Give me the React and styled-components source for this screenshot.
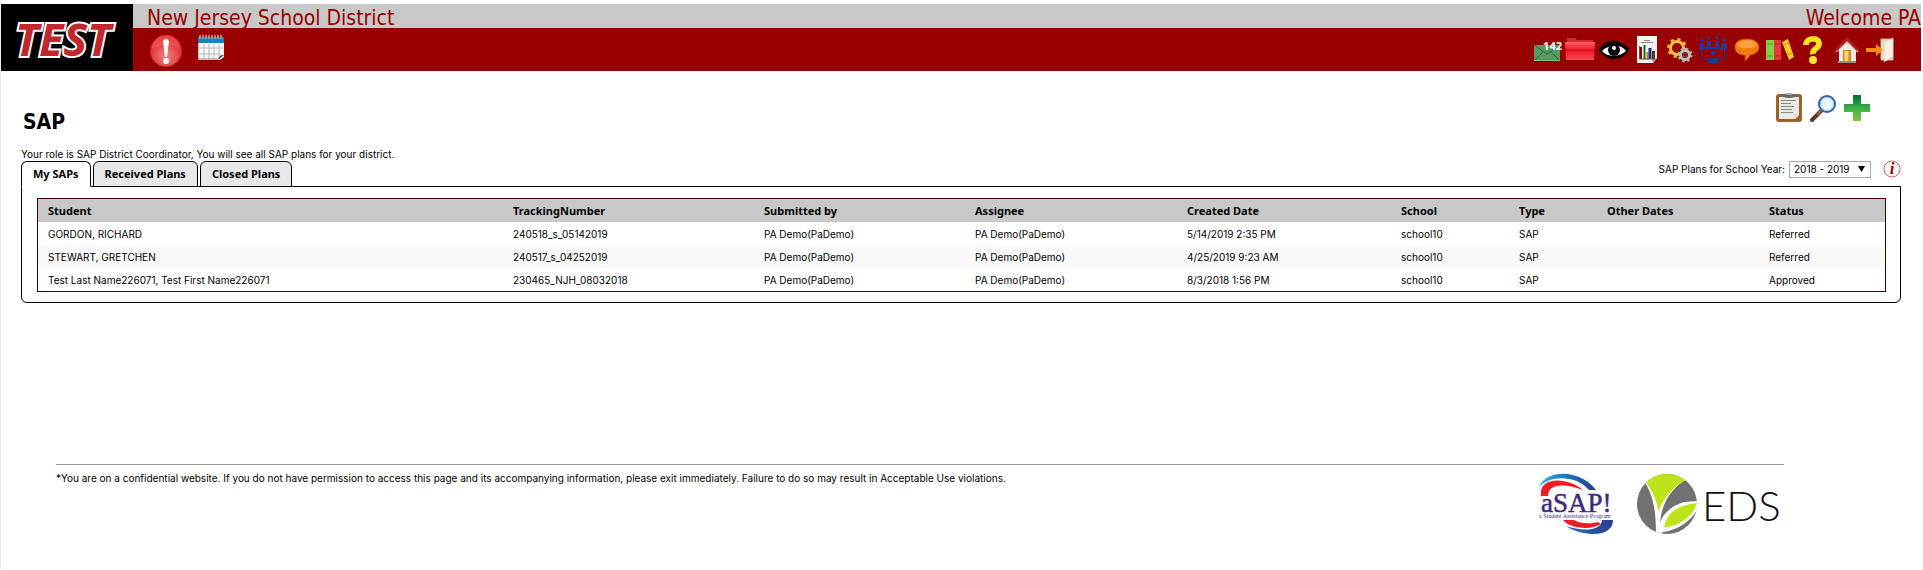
import React, { useState } from 'react';
import styled, { createGlobalStyle } from 'styled-components';

const plans = [
    { student: 'GORDON, RICHARD', tracking: '240518_s_05142019', created: '5/14/2019 2:35 PM', status: 'Referred' },
    { student: 'STEWART, GRETCHEN', tracking: '240517_s_04252019', created: '4/25/2019 9:23 AM', status: 'Referred' },
    { student: 'Test Last Name226071, Test First Name226071', tracking: '230465_NJH_08032018', created: '8/3/2018 1:56 PM', status: 'Approved' },
]

const columns = [
    { title: 'Student', width: 465 },
    { title: 'TrackingNumber', width: 251 },
    { title: 'Submitted by', width: 211 },
    { title: 'Assignee', width: 212 },
    { title: 'Created Date', width: 214 },
    { title: 'School', width: 118 },
    { title: 'Type', width: 88 },
    { title: 'Other Dates', width: 162 },
    { title: 'Status', width: 126 },
]

const tabs = ['My SAPs', 'Received Plans', 'Closed Plans']

export default function App() {
    const [tab, setTab] = useState('My SAPs')

    return (
        <Page>
            <GlobalStyle />
            <Header />
            <Main>
                <TitleRow>
                    <h1>SAP</h1>
                    <Tools>
                        <ToolButton aria-label="Plan list"><ClipboardIcon /></ToolButton>
                        <ToolButton aria-label="Search"><SearchIcon /></ToolButton>
                        <ToolButton aria-label="Add plan"><PlusIcon /></ToolButton>
                    </Tools>
                </TitleRow>
                <TabRow>
                    <div>
                        <p>Your role is SAP District Coordinator, You will see all SAP plans for your district.</p>
                        <Tabs role="tablist">
                            {tabs.map(name => (
                                <Tab key={name} role="tab" $active={name === tab} aria-selected={name === tab} onClick={() => setTab(name)}>{name}</Tab>
                            ))}
                        </Tabs>
                    </div>
                    <YearFilter />
                </TabRow>
                <Panel>
                    <PlansTable />
                </Panel>
            </Main>
            <Footer />
        </Page>
    )
}

function Header() {
    return (
        <Top>
            <Logo><TestLogo /></Logo>
            <Bars>
                <NameBar>
                    <span>New Jersey School District</span>
                    <span>Welcome PA</span>
                </NameBar>
                <MenuBar>
                    <Shortcuts>
                        <a href="#alerts" aria-label="Alerts"><AlertIcon /></a>
                        <a href="#calendar" aria-label="Calendar"><CalendarIcon /></a>
                    </Shortcuts>
                    <Menu>
                        <MailLink href="#mail" aria-label="Messages"><MailIcon /><Count>142</Count></MailLink>
                        <MenuLink href="#files" aria-label="Files"><FolderIcon /></MenuLink>
                        <MenuLink href="#view" aria-label="View"><EyeIcon /></MenuLink>
                        <MenuLink href="#reports" aria-label="Reports"><ReportIcon /></MenuLink>
                        <MenuLink href="#settings" aria-label="Settings"><GearsIcon /></MenuLink>
                        <MenuLink href="#team" aria-label="Team"><TeamIcon /></MenuLink>
                        <MenuLink href="#chat" aria-label="Discussion"><SpeechIcon /></MenuLink>
                        <MenuLink href="#library" aria-label="Library"><BooksIcon /></MenuLink>
                        <MenuLink href="#help" aria-label="Help"><HelpIcon /></MenuLink>
                        <MenuLink href="#home" aria-label="Home"><HomeIcon /></MenuLink>
                        <MenuLink href="#logout" aria-label="Log out"><ExitIcon /></MenuLink>
                    </Menu>
                </MenuBar>
            </Bars>
        </Top>
    )
}

function YearFilter() {
    return (
        <Filter>
            <label htmlFor="year">SAP Plans for School Year:</label>
            <SelectBox>
                <select id="year" defaultValue="2018 - 2019">
                    <option>2017 - 2018</option>
                    <option>2018 - 2019</option>
                </select>
                <svg width="7" height="6" viewBox="0 0 7 6"><path d="M0 0h7L3.500 6z" fill="#000" /></svg>
            </SelectBox>
            <InfoButton aria-label="Information"><InfoIcon /></InfoButton>
        </Filter>
    )
}

function PlansTable() {
    return (
        <Table>
            <colgroup>
                {columns.map(column => <Column key={column.title} $width={column.width} />)}
            </colgroup>
            <thead>
                <tr>{columns.map(column => <th key={column.title}>{column.title}</th>)}</tr>
            </thead>
            <tbody>
                {plans.map(plan => (
                    <tr key={plan.tracking}>
                        <td>{plan.student}</td>
                        <td>{plan.tracking}</td>
                        <td>PA Demo(PaDemo)</td>
                        <td>PA Demo(PaDemo)</td>
                        <td>{plan.created}</td>
                        <td>school10</td>
                        <td>SAP</td>
                        <td></td>
                        <td>{plan.status}</td>
                    </tr>
                ))}
            </tbody>
        </Table>
    )
}

function Footer() {
    return (
        <Bottom>
            <p>*You are on a confidential website. If you do not have permission to access this page and its accompanying information, please exit immediately. Failure to do so may result in Acceptable Use violations.</p>
            <Brands>
                <AsapLogo />
                <EdsLogo />
            </Brands>
        </Bottom>
    )
}

/* logos */

function TestLogo() {
    return (
        <svg width="132" height="67" viewBox="0 0 132 67">
            <text x="14" y="52" fontFamily="'Open Sans', sans-serif" fontSize="45" fontWeight="700" fontStyle="italic" fill="#c1272d" stroke="#fff" strokeWidth="4" strokeLinejoin="miter" paintOrder="stroke">TEST</text>
        </svg>
    )
}

function AsapLogo() {
    return (
        <svg width="78" height="62" viewBox="0 0 78 62">
            <defs>
                <linearGradient id="asapTop"><stop offset="0" stopColor="#35b4e5" /><stop offset=".5" stopColor="#1a75bb" /><stop offset="1" stopColor="#2b3990" /></linearGradient>
                <linearGradient id="asapLow"><stop offset="0" stopColor="#1c75bc" /><stop offset="1" stopColor="#2b3990" /></linearGradient>
            </defs>
            <path d="M1 14C8-4 42-4 58 17h-7C38 2 12 2 1 14z" fill="url(#asapTop)" />
            <path d="M3 23C0 3 30 4 45 17 30 11 10 9 10 23z" fill="#ed1c24" />
            <path d="M75 47C75 66 42 63 28 53c15 5 35 6 36-6z" fill="url(#asapLow)" />
            <path d="M25 47c6 8 27 11 38 4l-3-2c-7 2-18 2-24-2z" fill="#ed1c24" />
            <text x="3" y="39" fontFamily="'Liberation Serif', serif" fontSize="27" fill="#3d2a7d" stroke="#3d2a7d" strokeWidth=".5">aSAP!</text>
            <text x="1" y="45" fontFamily="'Liberation Serif', serif" fontSize="6" fill="#3d2a7d">a Student Assistance Program</text>
        </svg>
    )
}

function EdsLogo() {
    return (
        <svg width="146" height="62" viewBox="0 0 146 62">
            <defs><clipPath id="edsDisc"><circle cx="31" cy="31" r="30" /></clipPath></defs>
            <g clipPath="url(#edsDisc)">
                <path d="M0 0h62v62H0z" fill="#717171" />
                <path d="M8 8C17 22 20 36 20 62h6C29 44 43 33 62 30 50 25 29 34 24 50 26 28 36 15 52 5z" fill="#fff" />
                <path d="M10 9C18 21 22 30 22 39 27 25 38 13 50 7L40-2H18z" fill="#bbe41a" />
                <path d="M27 56C29 38 42 31 62 29 59 44 44 54 27 56z" fill="#bbe41a" stroke="#fff" strokeWidth="2" />
                <path d="M27 58C41 56 54 48 61 35" fill="none" stroke="#fff" strokeWidth="2" />
            </g>
            <text x="66" y="48" fontFamily="Lato, sans-serif" fontSize="42" fontWeight="300" fill="#111">EDS</text>
        </svg>
    )
}

/* header icons */

function AlertIcon() {
    return (
        <svg width="34" height="34" viewBox="0 0 34 34">
            <defs><radialGradient id="alert" cx=".5" cy=".65" r=".6"><stop offset="0" stopColor="#ef8582" /><stop offset="1" stopColor="#e32124" /></radialGradient></defs>
            <circle cx="17" cy="17" r="16" fill="url(#alert)" stroke="#b81212" />
            <path d="M3 15a14 14 0 0 1 28 0C22 9 11 10 3 15z" fill="#f4625f" opacity=".5" />
            <path d="M14 7q3-5 6 0l-2 16h-2z" fill="#fff" />
            <circle cx="17" cy="27" r="3" fill="#fff" />
        </svg>
    )
}

function CalendarIcon() {
    return (
        <svg width="26" height="27" viewBox="0 0 26 27">
            <path d="M0 3h26v20l-4 3H1l-1-1z" fill="#f8f8f8" />
            <path d="M0 3h26v6H0z" fill="#1784bd" />
            <path d="M2 1v4M5 1v4M8 1v4M11 1v4M14 1v4M17 1v4M20 1v4M23 1v4" stroke="#aaa" strokeWidth="1.500" />
            <path d="M1 14h24M1 20h21M6 10v15M11 10v15M16 10v15M21 10v12" stroke="#b8b8b8" fill="none" />
            <path d="M0 9v16h20" stroke="#888" fill="none" />
            <path d="M20 26c1-4 2-5 6-5z" fill="#444" />
        </svg>
    )
}

function MailIcon() {
    return (
        <svg width="26" height="16" viewBox="0 0 26 16">
            <path d="M0 0h26v16H0z" fill="#569b62" />
            <path d="M0 0l13 9L26 0M0 16l9-9M26 16l-9-9" stroke="#2e693b" fill="none" />
            <path d="M0 15.500h26" stroke="#84bd8d" />
        </svg>
    )
}

function FolderIcon() {
    return (
        <svg width="30" height="26" viewBox="0 0 30 26">
            <defs><linearGradient id="folder" x2="0" y2="1"><stop offset="0" stopColor="#ff6068" /><stop offset=".45" stopColor="#ee1825" /><stop offset="1" stopColor="#f34953" /></linearGradient></defs>
            <path d="M2 4V1h8l2 2h16v10H2z" fill="#d42835" />
            <path d="M0 5h30l-1 18H1z" fill="url(#folder)" />
            <path d="M1 13h28" stroke="#d40b18" />
        </svg>
    )
}

function EyeIcon() {
    return (
        <svg width="30" height="22" viewBox="0 0 30 22">
            <path d="M0 11C4 4 10 1 17 2c6 1 9 4 13 8-3 7-9 10-16 10-6 0-10-4-14-9z" fill="#000" />
            <path d="M3 12C8 6 22 4 27 12c-6 6-18 7-24 0z" fill="#fff" />
            <circle cx="15" cy="11" r="6" fill="#000" />
            <circle cx="15" cy="9" r="2" fill="#fff" />
        </svg>
    )
}

function ReportIcon() {
    return (
        <svg width="20" height="27" viewBox="0 0 20 27">
            <path d="M0 0h20v22l-4 5H0z" fill="#f5f5f5" />
            <path d="M20 22l-4 5-1-4z" fill="#999" />
            <path d="M7 4.500h6M4 6.500h12" stroke="#888" />
            <path d="M4 11v12" stroke="#880808" strokeWidth="2" />
            <path d="M7.500 9v14" stroke="#147216" strokeWidth="2" />
            <path d="M10.500 16v7" stroke="#e07910" strokeWidth="2" />
            <path d="M13 12v11" stroke="#142b89" strokeWidth="3" />
            <path d="M16.500 15v8" stroke="#65340d" strokeWidth="3" />
            <path d="M2.500 10v13H18" stroke="#555" fill="none" />
        </svg>
    )
}

function GearsIcon() {
    return (
        <svg width="26" height="26" viewBox="0 0 26 26">
            <circle cx="10" cy="11" r="8" fill="none" stroke="#efb125" strokeWidth="4" strokeDasharray="3 3.283" />
            <circle cx="10" cy="11" r="6.500" fill="none" stroke="#f5bf3b" strokeWidth="3" />
            <circle cx="18" cy="18" r="6" fill="#900" stroke="#aaa" strokeWidth="3" strokeDasharray="2.300 2.412" />
            <circle cx="18" cy="18" r="4.500" fill="#900" stroke="#bdbdbd" strokeWidth="3" />
            <circle cx="18" cy="18" r="2" fill="none" stroke="#555" />
        </svg>
    )
}

function TeamIcon() {
    return (
        <svg width="30" height="28" viewBox="0 0 30 28">
            <g fill="#213a8f">
                <circle cx="4" cy="4" r="1.700" /><circle cx="11" cy="2" r="1.700" /><circle cx="19" cy="2" r="1.700" /><circle cx="26" cy="4" r="1.700" /><circle cx="15" cy="17" r="2.500" />
                <path d="M1 7h5l1 7H1zM9 5h4v6H9zM17 5h4v6h-4zM24 7h5v7h-6zM10 22h10v5H10z" />
            </g>
            <path d="M7 12h16" stroke="#213a8f" strokeWidth="2" />
            <path d="M3.500 14v9H10M26.500 14v9H20" stroke="#213a8f" fill="none" />
        </svg>
    )
}

function SpeechIcon() {
    return (
        <svg width="26" height="24" viewBox="0 0 26 24">
            <path d="M13 1C5 1 1 4 1 9s4 8 9 8q2 0 1 6 3-2 5-6c6-1 9-4 9-8 0-5-5-8-12-8z" fill="#f17b08" stroke="#d95d00" strokeWidth=".5" />
            <path d="M3 8C4 0 22 0 23 8 17 11 8 11 3 8z" fill="#ffae52" opacity=".75" />
        </svg>
    )
}

function BooksIcon() {
    return (
        <svg width="28" height="22" viewBox="0 0 28 22">
            <path d="M0 1h8v20H0z" fill="#83ce4c" />
            <path d="M8 1h7v20H8z" fill="#e8383c" />
            <path d="M16 3l6-3 6 18-5 3z" fill="#fbcb21" />
            <path d="M1 5h6M1 17h6" stroke="#5ba42a" /><path d="M9 5h5M9 17h5" stroke="#b62129" /><path d="M18 6l5-2M21 16l5-2" stroke="#c49208" />
        </svg>
    )
}

function HelpIcon() {
    return (
        <svg width="20" height="28" viewBox="0 0 20 28">
            <path d="M3 9C3 1 17 1 16 8c0 5-7 4-6 10" stroke="#c79a00" strokeWidth="6" fill="none" />
            <path d="M3 9C3 1 17 1 16 8c0 5-7 4-6 10" stroke="#ffe51d" strokeWidth="5" fill="none" />
            <circle cx="10" cy="24" r="4" fill="#ffe22c" />
        </svg>
    )
}

function HomeIcon() {
    return (
        <svg width="24" height="26" viewBox="0 0 24 26">
            <path d="M4 12v12h17V12l-9-7z" fill="#e9ebe4" />
            <path d="M8 13h8v12H8z" fill="#d78714" />
            <path d="M9.500 14h4v10h-4z" fill="#ffd96b" />
            <path d="M1 15L12 4l11 11" fill="none" stroke="#e4c4c0" strokeWidth="1.500" />
            <path d="M1 13L12 2l11 11" fill="none" stroke="#b31c1c" strokeWidth="3" />
            <path d="M3 25h18" stroke="#899177" strokeWidth="2" />
        </svg>
    )
}

function ExitIcon() {
    return (
        <svg width="28" height="26" viewBox="0 0 28 26">
            <path d="M15 2h12v21H15z" fill="#eee0cb" stroke="#c8b79e" />
            <path d="M18 5l9-4v19l-9 5z" fill="#f8efe1" stroke="#cdbb9f" strokeWidth=".5" />
            <path d="M0 11h10V7l7 6-7 6v-4H0z" fill="#ff8b15" />
        </svg>
    )
}

/* page icons */

function ClipboardIcon() {
    return (
        <svg width="26" height="30" viewBox="0 0 26 30">
            <rect y="1" width="26" height="28" rx="3" fill="#97642c" />
            <path d="M3 4h20v18l-4 4H3z" fill="#e9e9e8" />
            <path d="M19 26v-4h4z" fill="#fff" stroke="#aaa" strokeWidth=".5" />
            <path d="M7 1h12v3q-6 2-12 0z" fill="#666" /><path d="M10 0h6v2h-6z" fill="#aaa" />
            <path d="M5 7.500h15M5 10.500h10M5 13.500h13M5 16.500h11M5 19.500h12" stroke="#888" />
        </svg>
    )
}

function SearchIcon() {
    return (
        <svg width="26" height="28" viewBox="0 0 26 28">
            <path d="M11 17L2 26" stroke="#5d3826" strokeWidth="4" strokeLinecap="round" />
            <path d="M12 16l-5 5" stroke="#a26c45" strokeWidth="2" />
            <circle cx="17" cy="10" r="8" fill="#eaf5ff" stroke="#2864b0" strokeWidth="2" />
            <circle cx="17" cy="10" r="6.500" fill="none" stroke="#a8c7e5" />
        </svg>
    )
}

function PlusIcon() {
    return (
        <svg width="26" height="26" viewBox="0 0 26 26">
            <defs><linearGradient id="plus" x2="0" y2="1"><stop offset="0" stopColor="#006b3b" /><stop offset=".5" stopColor="#3ab14a" /><stop offset="1" stopColor="#8cc63f" /></linearGradient></defs>
            <path d="M9 0h8v9h9v8h-9v9H9v-9H0V9h9z" fill="url(#plus)" />
        </svg>
    )
}

function InfoIcon() {
    return (
        <svg width="18" height="18" viewBox="0 0 18 18">
            <circle cx="9" cy="9" r="8" fill="#fff" stroke="#c43d3d" strokeWidth=".8" />
            <text x="9" y="14" textAnchor="middle" fontFamily="'Liberation Serif', serif" fontSize="17" fontWeight="700" fontStyle="italic" fill="#a00000">i</text>
        </svg>
    )
}

const GlobalStyle = createGlobalStyle`
    * {
        box-sizing: border-box;
    }
    body {
        margin: 0;
        background: #fff;
        color: #000;
        font-family: Inter, sans-serif;
        font-size: 10px;
        line-height: 14px;
    }
    h1, p {
        margin: 0;
    }
    svg {
        display: block;
    }
    button {
        padding: 0;
        border: 0;
        background: none;
        cursor: pointer;
    }
`;
const Page = styled.div`
    min-height: 100vh;
    padding: 4px 2px 0 0;
    border-left: 1px solid #eee;
`;
const Top = styled.header`
    display: flex;
    height: 67px;
`;
const Logo = styled.div`
    width: 132px;
    background: #000;
`;
const Bars = styled.div`
    flex: 1;
    display: flex;
    flex-direction: column;
`;
const NameBar = styled.div`
    display: flex;
    justify-content: space-between;
    height: 24px;
    padding-left: 14px;
    background: #c8c8c8;
    color: #900;
    font-family: 'DejaVu Sans Condensed', sans-serif;
    font-size: 21px;
    line-height: 28px;
`;
const MenuBar = styled.nav`
    flex: 1;
    display: flex;
    align-items: center;
    justify-content: space-between;
    padding: 0 26px 0 16px;
    background: #900;
`;
const Shortcuts = styled.div`
    display: flex;
    gap: 15px;
    padding-top: 3px;
`;
const Menu = styled.div`
    display: flex;
    justify-content: space-between;
    width: 363px;
`;
const MenuLink = styled.a`
    position: relative;
    display: flex;
    align-items: center;
    justify-content: center;
    width: 30px;
    height: 30px;
`;
const MailLink = styled(MenuLink)`
    padding-top: 6px;
`;
const Count = styled.span`
    position: absolute;
    top: 4px;
    right: 0;
    color: #fff;
    font: 700 11px/14px 'Noto Sans', sans-serif;
`;
const Main = styled.main`
    padding: 20px 20px 0;
`;
const TitleRow = styled.div`
    display: flex;
    justify-content: space-between;
    height: 56px;
    h1 {
        padding: 19px 0 0 2px;
        font: 700 21px/24px 'DejaVu Sans Condensed', sans-serif;
    }
`;
const Tools = styled.div`
    display: flex;
    align-items: center;
    gap: 8px;
    height: 34px;
    margin-right: 31px;
`;
const ToolButton = styled.button`
    width: 26px;
`;
const TabRow = styled.div`
    display: flex;
    justify-content: space-between;
    align-items: flex-end;
`;
const Tabs = styled.div`
    display: flex;
    gap: 2px;
    margin-bottom: -1px;
`;
const Tab = styled.button`
    position: relative;
    height: 26px;
    padding: 0 11px;
    border: 1px solid #000;
    border-bottom-color: ${props => props.$active ? '#fff' : '#000'};
    border-radius: 6px 6px 0 0;
    background: ${props => props.$active ? '#fff' : '#e8e8e8'};
    color: #000;
    font: 700 11px/16px 'Noto Sans', sans-serif;
`;
const Filter = styled.div`
    display: flex;
    align-items: center;
    gap: 4px;
    padding-bottom: 8px;
`;
const SelectBox = styled.div`
    position: relative;
    select {
        appearance: none;
        display: block;
        width: 82px;
        height: 17px;
        padding: 0 4px;
        border: 1px solid #a9a9a9;
        border-radius: 0;
        background: #fff;
        color: #000;
        font: inherit;
    }
    svg {
        position: absolute;
        top: 5px;
        right: 6px;
        pointer-events: none;
    }
`;
const InfoButton = styled.button`
    margin-left: 8px;
`;
const Panel = styled.section`
    padding: 11px 16px 10px 15px;
    border: 1px solid #000;
    border-radius: 0 0 6px 6px;
`;
const Table = styled.table`
    width: 100%;
    table-layout: fixed;
    border: 1px solid #400;
    border-spacing: 0;
    th, td {
        height: 23px;
        padding: 0 0 0 10px;
        text-align: left;
        white-space: nowrap;
    }
    th {
        padding-top: 1px;
        background: #c8c8c8;
        font: 700 11px/14px 'Noto Sans', sans-serif;
    }
    tbody tr:nth-child(even) {
        background: #f9f9f9;
    }
`;
const Column = styled.col`
    width: ${props => props.$width}px;
`;
const Bottom = styled.footer`
    display: flex;
    justify-content: space-between;
    margin: 161px 137px 0 55px;
    padding-top: 6px;
    border-top: 1px solid #999;
`;
const Brands = styled.div`
    display: flex;
    gap: 20px;
    padding: 2px 2px 0 0;
`;
